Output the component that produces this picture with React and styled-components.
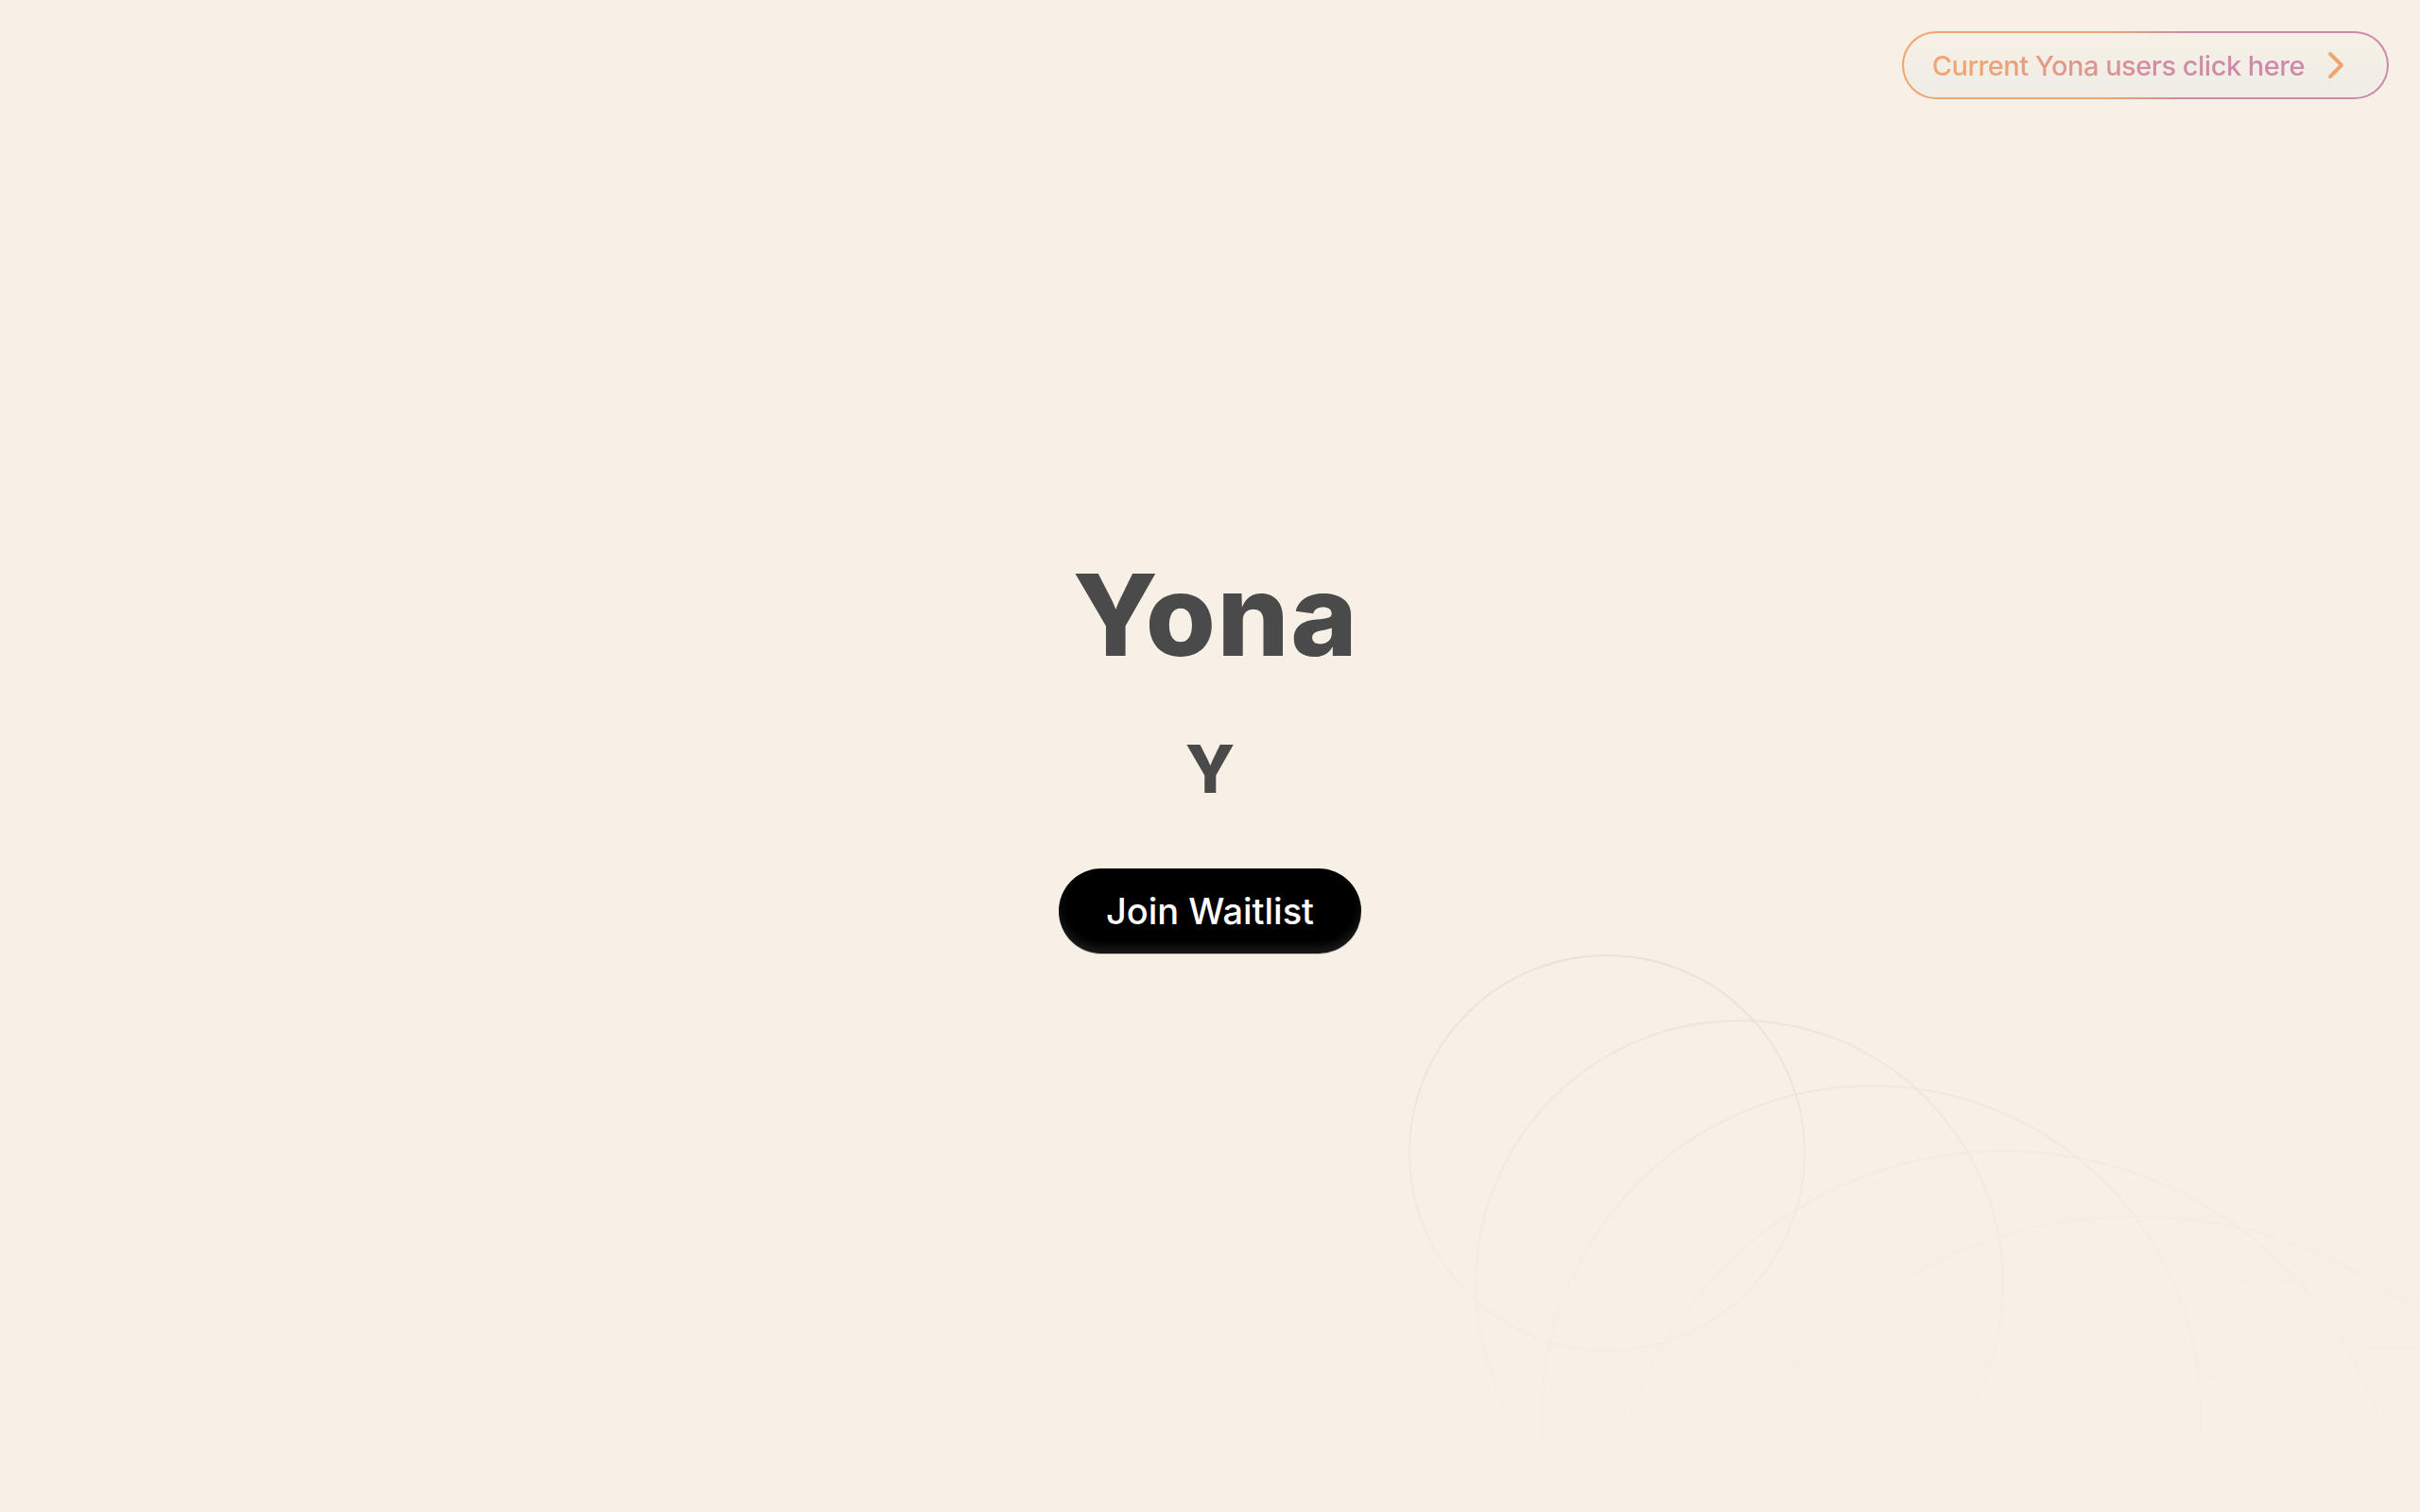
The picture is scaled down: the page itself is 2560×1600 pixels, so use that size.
import React from "react";
import styled, { createGlobalStyle } from "styled-components";

const GlobalStyle = createGlobalStyle`
  html, body {
    margin: 0;
    padding: 0;
    background: #f7f0e6;
  }
  body {
    font-family: Inter, "Noto Sans", "Liberation Sans", sans-serif;
    -webkit-font-smoothing: antialiased;
  }
  * {
    box-sizing: border-box;
  }
`;

const Page = styled.div`
  position: relative;
  min-height: 100vh;
  display: flex;
  flex-direction: column;
  background: #f7f0e6;
  overflow: hidden;
`;

const Rings = styled.svg`
  position: absolute;
  inset: 0;
  width: 100%;
  height: 100%;
  pointer-events: none;
  z-index: 0;
  -webkit-mask-image: linear-gradient(180deg, #000 62%, rgba(0, 0, 0, 0.25) 85%, transparent 100%);
  mask-image: linear-gradient(180deg, #000 62%, rgba(0, 0, 0, 0.25) 85%, transparent 100%);
`;

const Header = styled.header`
  position: relative;
  z-index: 1;
  height: 138px;
  display: flex;
  justify-content: flex-end;
  align-items: flex-start;
  padding: 33px 33px 0 0;
`;

const UserLink = styled.a`
  display: flex;
  align-items: center;
  gap: 24px;
  height: 72px;
  padding: 0 45px 0 30px;
  border: 2px solid transparent;
  border-radius: 36px;
  background:
    linear-gradient(180deg, #f7f0e6 0%, #efede6 100%) padding-box,
    linear-gradient(90deg, #f0a56e 42%, #cf8aa8 58%) border-box;
  text-decoration: none;
  cursor: pointer;
`;

const LinkText = styled.span`
  font-size: 29px;
  font-weight: 500;
  letter-spacing: -0.5px;
  background: linear-gradient(90deg, #f0a56e 10%, #d08ca6 62%, #cd89aa 100%);
  -webkit-background-clip: text;
  background-clip: text;
  color: transparent;
`;

const Main = styled.main`
  position: relative;
  z-index: 1;
  flex: 1;
  display: flex;
  flex-direction: column;
  align-items: center;
  justify-content: center;
`;

const Title = styled.h1`
  margin: 0;
  padding-left: 12px;
  font-size: 120px;
  line-height: 1;
  font-weight: 800;
  color: #4a4a4a;
  letter-spacing: 1.5px;
`;

const Mark = styled.div`
  margin-top: 68px;
  font-size: 70px;
  line-height: 1;
  font-weight: 800;
  color: #4a4a4a;
`;

const WaitlistButton = styled.button`
  margin-top: 70px;
  height: 90px;
  padding: 0 50px;
  border: none;
  border-radius: 45px;
  background: #000;
  box-shadow: inset 0 -7px 8px rgba(255, 255, 255, 0.1), 0 1px 0 rgba(0, 0, 0, 0.2);
  color: #fff;
  font-family: inherit;
  font-size: 38px;
  font-weight: 500;
  cursor: pointer;
`;

const Spacer = styled.div`
  height: 138px;
`;

const rings = [0, 1, 2, 3, 4, 5, 6];

const Chevron = () => (
  <svg width="18" height="30" viewBox="0 0 18 30" fill="none">
    <path
      d="M3 3 L15 15 L3 27"
      stroke="#f0a56e"
      strokeWidth="4"
      strokeLinecap="round"
      strokeLinejoin="round"
    />
  </svg>
);

export default function App() {
  return (
    <>
      <GlobalStyle />
      <Page>
        <Rings viewBox="0 0 2560 1600" preserveAspectRatio="xMidYMid slice">
          {rings.map((i) => (
            <circle
              key={i}
              cx={1700 + 140 * i}
              cy={1220 + 139 * i}
              r={209 + 70 * i}
              fill="none"
              stroke="#e6dfd5"
              strokeWidth="2"
              opacity={Math.max(0.25, 0.85 - i * 0.12)}
            />
          ))}
        </Rings>
        <Header>
          <UserLink>
            <LinkText>Current Yona users click here</LinkText>
            <Chevron />
          </UserLink>
        </Header>
        <Main>
          <Title>Yona</Title>
          <Mark>Y</Mark>
          <WaitlistButton>Join Waitlist</WaitlistButton>
        </Main>
        <Spacer />
      </Page>
    </>
  );
}
